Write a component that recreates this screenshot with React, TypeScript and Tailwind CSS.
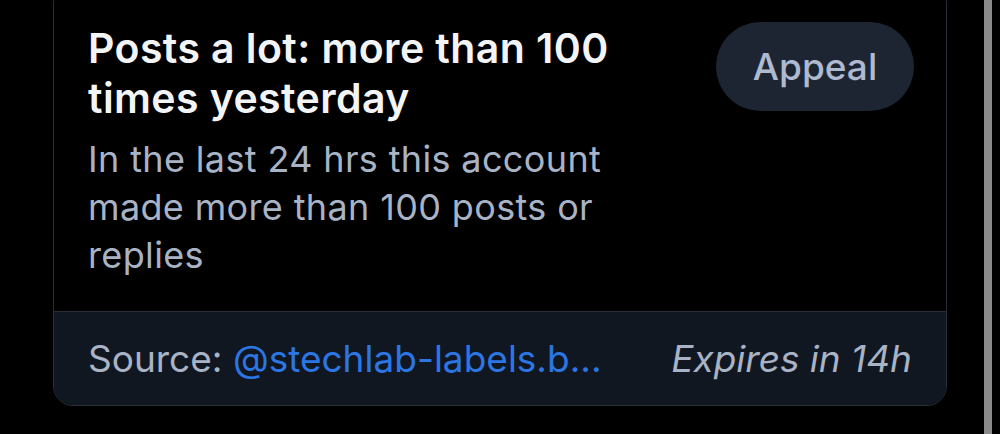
import React from "react";

export default function App() {
  return (
    <div
      className="relative h-[434px] w-[1000px] overflow-hidden bg-black"
      style={{ fontFamily: "Inter, 'Noto Sans', sans-serif" }}
    >
      <div className="mx-[53px] mt-[-16px] overflow-hidden rounded-[20px] border border-[#2a2f37]">
        <div className="flex items-start justify-between pl-[34px] pr-[32px] pt-[38px] pb-[32px]">
          <div className="w-[560px]">
            <div className="text-[41px] font-semibold leading-[50px] tracking-[0.01em] text-[#f3f4f6]">
              Posts a lot: more than 100 times yesterday
            </div>
            <div className="mt-[12px] text-[36px] leading-[48px] tracking-[0.01em] text-[#a8b3c5]">
              In the last 24 hrs this account made more than 100 posts or replies
            </div>
          </div>
          <button className="mt-[-1px] flex h-[89px] w-[198px] items-center justify-center rounded-full bg-[#1e2532] text-[37px] font-medium text-[#adbacf]">
            Appeal
          </button>
        </div>
        <div className="flex h-[94px] items-center justify-between border-t border-[#2a2f37] bg-[#111721] pl-[34px] pr-[34px] text-[37px] leading-[48px]">
          <div className="flex min-w-0 text-[#a8b3c5]">
            <span className="shrink-0">Source:&nbsp;</span>
            <span className="whitespace-nowrap text-[#2c76e4]">@stechlab-labels.b...</span>
          </div>
          <span className="shrink-0 italic text-[#a8b3c5]">Expires in 14h</span>
        </div>
      </div>
      <div className="absolute left-[984px] top-0 h-full w-[8px] bg-[#8a8a8a]" />
    </div>
  );
}
